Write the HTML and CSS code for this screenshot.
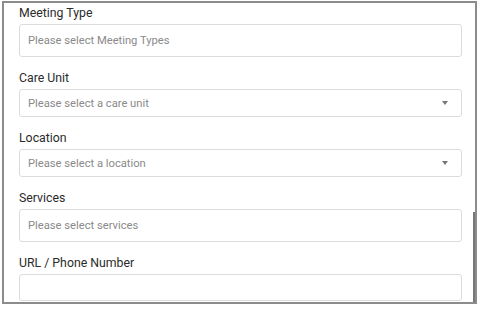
FILE: index.html
```html
<!DOCTYPE html>
<html>
<head>
<meta charset="utf-8">
<link rel="stylesheet" href="styles.css">
</head>
<body>
<div class="frame">
  <div class="form">
    <div class="field">
      <label class="label">Meeting Type</label>
      <div class="input tall"><span class="ph">Please select Meeting Types</span></div>
    </div>
    <div class="field">
      <label class="label">Care Unit</label>
      <div class="input select"><span class="ph">Please select a care unit</span><span class="caret"></span></div>
    </div>
    <div class="field">
      <label class="label">Location</label>
      <div class="input select"><span class="ph">Please select a location</span><span class="caret"></span></div>
    </div>
    <div class="field">
      <label class="label">Services</label>
      <div class="input tall"><span class="ph">Please select services</span></div>
    </div>
    <div class="field">
      <label class="label">URL / Phone Number</label>
      <div class="input url"></div>
    </div>
  </div>
  <div class="thumb"></div>
</div>
</body>
</html>
```
FILE: styles.css
```css
html, body {
  margin: 0;
  padding: 0;
  background: #fff;
}
body {
  font-family: Roboto, "Liberation Sans", Arial, sans-serif;
}
.frame {
  position: relative;
  margin: 1px 0 0 2px;
  width: 471px;
  height: 299px;
  border: 2px solid #8c8c8c;
  overflow: hidden;
  background: #fff;
}
.form {
  padding: 3px 13px 0 15px;
  display: flex;
  flex-direction: column;
  gap: 14px;
}
.field {
  display: flex;
  flex-direction: column;
  gap: 3px;
}
.label {
  font-size: 12.3px;
  line-height: 15px;
  color: #2b2b2b;
}
.input {
  box-sizing: border-box;
  border: 1px solid #dcdcdc;
  border-radius: 3px;
  display: flex;
  align-items: center;
  padding: 0 8px;
  background: #fff;
}
.tall { height: 33px; }
.select { height: 28px; justify-content: space-between; }
.url { height: 27px; }
.ph {
  font-size: 11.2px;
  color: #8a8a8a;
}
.caret {
  width: 0;
  height: 0;
  border-left: 3.5px solid transparent;
  border-right: 3.5px solid transparent;
  border-top: 4px solid #777;
  margin-right: 5px;
}
.thumb {
  position: absolute;
  right: 0;
  top: 209px;
  width: 2px;
  height: 92px;
  background: #777;
}
```
